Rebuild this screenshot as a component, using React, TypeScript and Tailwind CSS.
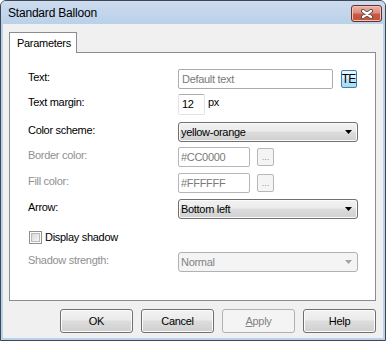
import React from "react";

const btnBg =
  "bg-[linear-gradient(to_bottom,#f2f2f2_0%,#ebebeb_45%,#dddddd_50%,#cfcfcf_100%)]";

function Arrow({ disabled }: { disabled?: boolean }) {
  return (
    <svg width="7" height="4" viewBox="0 0 7 4" className="shrink-0">
      <polygon points="0,0 7,0 3.5,4" fill={disabled ? "#a3a3a3" : "#000000"} />
    </svg>
  );
}

function Label({ children, disabled }: { children: React.ReactNode; disabled?: boolean }) {
  return (
    <div
      className={
        disabled
          ? "w-[150px] shrink-0 pb-[4px] text-[#8f8f8f]"
          : "w-[150px] shrink-0 pb-[4px] text-black"
      }
    >
      {children}
    </div>
  );
}

function Select({ value, disabled }: { value: string; disabled?: boolean }) {
  return (
    <div
      className={
        disabled
          ? "w-[180px] h-[20px] flex items-center rounded-[3px] border border-[#adb2b5] bg-[#f4f4f4] pl-[2px] pr-[5px] text-[#838383]"
          : "w-[180px] h-[20px] flex items-center rounded-[3px] border border-[#707070] bg-[linear-gradient(to_bottom,#f2f2f2_0%,#ebebeb_45%,#dddddd_50%,#cfcfcf_100%)] shadow-[inset_0_0_0_1px_#fbfbfb] pl-[2px] pr-[5px] text-black"
      }
    >
      <span className="flex-1">{value}</span>
      <Arrow disabled={disabled} />
    </div>
  );
}

function DotsButton() {
  return (
    <div className="w-[17px] h-[18px] ml-[7px] rounded-[2px] border border-[#b5b9bc] bg-[#f4f4f4] flex items-end justify-center pb-[3px]">
      <span className="text-[#8f8f8f] text-[9px] leading-[9px] tracking-[0px]">...</span>
    </div>
  );
}

function DisabledInput({ value }: { value: string }) {
  return (
    <div className="w-[72px] h-[20px] rounded-[2px] border border-[#b4b6b9] bg-white flex items-center pl-[2px] text-[#7a7a7a]">
      {value}
    </div>
  );
}

function DlgButton({ children, disabled }: { children: React.ReactNode; disabled?: boolean }) {
  return (
    <div
      className={
        disabled
          ? "w-[73px] h-[24px] rounded-[3px] border border-[#adb2b5] bg-[#f4f4f4] flex items-center justify-center text-[#838383]"
          : `w-[73px] h-[24px] rounded-[3px] border border-[#707070] ${btnBg} shadow-[inset_0_0_0_1px_#fbfbfb] flex items-center justify-center text-black`
      }
    >
      {children}
    </div>
  );
}

export default function App() {
  return (
    <div className="w-[386px] h-[341px] flex flex-col border border-[#3d4652] rounded-t-[6px] bg-[#b9d1ea] overflow-hidden font-['Liberation_Sans',Arial,sans-serif] text-[11px] leading-[13px] tracking-[-0.3px]">
      {/* Title bar */}
      <div className="h-[23px] shrink-0 flex items-start bg-gradient-to-b from-[#cddbee] to-[#b9d1ea]">
        <span className="ml-[7px] mt-[5px] text-[12px] leading-[15px] tracking-[-0.2px] text-black">
          Standard Balloon
        </span>
        <div className="ml-auto mt-[4px] mr-[3px] w-[31px] h-[17px] rounded-[3px] border border-[#6b2f27] bg-[linear-gradient(to_bottom,#eab3a6_0%,#dc8e7e_45%,#c85a45_55%,#c4513b_100%)] shadow-[inset_0_0_0_1px_#f0c4b8] flex items-center justify-center">
          <svg width="14" height="10" viewBox="0 0 14 10">
            <path d="M3 2 L11 8 M11 2 L3 8" stroke="#4b4b4b" strokeWidth="4" strokeLinecap="round" />
            <path d="M3 2 L11 8 M11 2 L3 8" stroke="#ffffff" strokeWidth="2.2" strokeLinecap="round" />
          </svg>
        </div>
      </div>

      {/* Content */}
      <div className="flex-1 mx-[2px] mb-[2px] bg-[#f0f0f0] flex flex-col pt-[8px] pl-[6px] pr-[7px]">
        {/* Tab strip */}
        <div className="flex">
          <div className="relative z-10 -mb-px w-[68px] h-[21px] border border-b-0 border-[#898c95] bg-white flex items-start pt-[4px] pl-[7px] text-black">
            Parameters
          </div>
        </div>
        {/* Pane */}
        <div className="h-[249px] border border-[#898c95] bg-white flex flex-col pt-[16px] pl-[18px]">
          {/* Text */}
          <div className="h-[20px] flex items-center">
            <Label>Text:</Label>
            <div className="w-[155px] h-[20px] rounded-[2px] border border-[#a9abaf] bg-white flex items-center pl-[3px] text-[#7a7a7a]">
              Default text
            </div>
            <div className="ml-[8px] w-[16px] h-[18px] rounded-[2px] border border-[#3c7fb1] bg-[linear-gradient(to_bottom,#eaf6fd_0%,#d9f0fc_45%,#bee6fd_50%,#a7d9f5_100%)] flex items-center justify-center text-black text-[12px] leading-[12px] tracking-[-0.8px] pr-[1px]">
              TE
            </div>
          </div>
          {/* Text margin */}
          <div className="mt-[5px] h-[21px] flex items-center">
            <Label>Text margin:</Label>
            <div className="w-[27px] h-[21px] rounded-[2px] border border-[#dfe3ea] border-t-[#abadb3] bg-white flex items-center pl-[3px] text-black">
              12
            </div>
            <span className="ml-[3px] pb-[4px] text-black">px</span>
          </div>
          {/* Color scheme */}
          <div className="mt-[7px] h-[20px] flex items-center">
            <Label>Color scheme:</Label>
            <Select value="yellow-orange" />
          </div>
          {/* Border color */}
          <div className="mt-[5px] h-[20px] flex items-center">
            <Label disabled>Border color:</Label>
            <DisabledInput value="#CC0000" />
            <DotsButton />
          </div>
          {/* Fill color */}
          <div className="mt-[6px] h-[20px] flex items-center">
            <Label disabled>Fill color:</Label>
            <DisabledInput value="#FFFFFF" />
            <DotsButton />
          </div>
          {/* Arrow */}
          <div className="mt-[6px] h-[20px] flex items-center">
            <Label>Arrow:</Label>
            <Select value="Bottom left" />
          </div>
          {/* Checkbox */}
          <div className="mt-[12px] h-[13px] flex items-center pl-[1px]">
            <div className="w-[13px] h-[13px] border border-[#8e8f8f] bg-white p-[1px] shrink-0">
              <div className="w-full h-full border border-[#b6babf] bg-gradient-to-br from-[#d6d9dd] to-[#f7f7f7]" />
            </div>
            <span className="ml-[3px] text-black">Display shadow</span>
          </div>
          {/* Shadow strength */}
          <div className="mt-[8px] h-[20px] flex items-center">
            <Label disabled>Shadow strength:</Label>
            <Select value="Normal" disabled />
          </div>
        </div>
        {/* Buttons */}
        <div className="mt-[8px] flex justify-end gap-[8px]">
          <DlgButton>OK</DlgButton>
          <DlgButton>Cancel</DlgButton>
          <DlgButton disabled>
            <span>
              <span className="underline">A</span>pply
            </span>
          </DlgButton>
          <DlgButton>Help</DlgButton>
        </div>
      </div>
    </div>
  );
}
